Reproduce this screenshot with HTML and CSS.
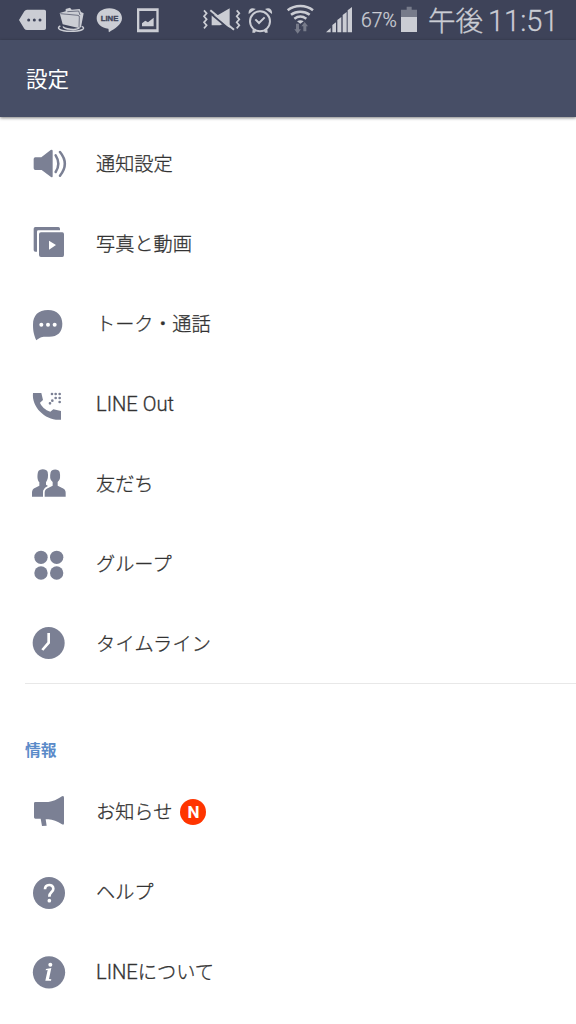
FILE: index.html
```html
<!DOCTYPE html>
<html lang="ja">
<head>
<meta charset="utf-8">
<title>設定</title>
<link rel="stylesheet" href="styles.css">
</head>
<body>
<div class="status">
  <svg class="w38" viewBox="57 0 114 120"><path d="M57 60 73 34Q76 29 81 29H133Q138 29 138 34V85Q138 90 133 90H81Q76 90 73 86Z"/><g class="bar-ink"><circle cx="86" cy="60" r="4.5"/><circle cx="103" cy="60" r="4.5"/><circle cx="120" cy="60" r="4.5"/></g></svg>
  <svg class="w39" viewBox="171 0 117 120"><path d="M179 39 197 34 197 27 210 23 215 29 239 27 243 36 251 40 243 82 236 84 188 73Z"/><path class="bar-line thin" d="M181 41 234 46Q239 47 238 52L237 82M202 35 236 33 240 45"/><path class="line" stroke-width="4.5" d="M181 78C168 84 178 93 211 94C244 94 260 86 245 79M190 79C188 88 232 92 238 83"/></svg>
  <svg class="w40" viewBox="288 0 120 120"><path d="M328 25C350 25 366 38 366 55C366 74 344 86 327 97C325 94 327 90 325 86C304 84 290 71 290 55C290 38 306 25 328 25Z"/><text class="bubble-text" x="302" y="64" textLength="53" lengthAdjust="spacingAndGlyphs">LINE</text></svg>
  <svg class="w24" viewBox="408 0 72 120"><path fill-rule="evenodd" d="M411 25H476V97H411ZM418 33V88H469V33Z"/><path d="M426 79V70L436 62 444 67 461 53V79Z"/></svg>
  <span class="spacer"></span>
  <svg class="w40" viewBox="36 0 120 120"><path d="M65 46H83L119 25V84L97 73 90 76H65Z"/><path class="bar-line" stroke-width="5" d="M60 39 128 96"/><path class="line" stroke-width="6" d="M61 31 132 89"/><path class="line" stroke-width="5" d="M42 31 50 40 42 49 50 58 42 67 50 76 42 85M140 31 148 40 140 49 148 58 140 67 148 76 140 85"/></svg>
  <svg class="w40" viewBox="156 0 120 120"><circle class="line" stroke-width="6" cx="210" cy="64" r="30"/><path class="line" stroke-width="6" d="M196 58 207 69 224 52"/><path d="M176 42C174 28 184 20 197 27ZM246 42C248 28 238 20 225 27ZM188 88 198 93 195 98H187ZM232 88 222 93 225 98H233Z"/></svg>
  <svg class="w40" viewBox="276 0 120 120"><path class="line" stroke-width="7.5" d="M293 31C314 14 348 14 369 31M303 44C319 32 343 32 359 44M313 56C324 48 338 48 349 56"/><path d="M321 64Q331 57 341 64L331 71Z"/><path class="dim" d="M318 71H327V88H333L323 101 313 88H318ZM340 94V79H334L344 66 354 79H349V94Z"/></svg>
  <svg class="w31" viewBox="396 0 93 120"><path d="M408 97 422 84V97ZM427 97V75L438 67V97ZM442 97V60L454 51V97ZM458 97V45L470 36V97ZM473 97V31L486 21V97Z"/></svg>
  <span class="percent">67%</span>
  <svg class="w18" viewBox="93 0 54 120"><path class="dim" d="M93 29H110V20H125V29H141V51H93Z"/><path d="M93 51H141V96H93Z"/></svg>
  <span class="ampm">午後</span><span class="clock">11:51</span>
</div>
<header class="title">設定</header>
<main>
  <ul class="list">
    <li><svg viewBox="24 24 120 120"><path d="M46 67H64L92 45Q98 42 98 48V124Q98 129 92 125L65 105H46Q41 105 41 100V72Q41 67 46 67Z"/><path class="icon-line" stroke-width="7.5" d="M107 61Q123 86 107 111M120 51Q149 86 120 122"/></svg>通知設定</li>
    <li><svg viewBox="24 264 120 120"><path d="M46 276H115Q120 276 120 281V286H55Q51 286 51 290V350H46Q41 350 41 345V281Q41 276 46 276Z"/><path fill-rule="evenodd" d="M63 292H127Q132 292 132 298V360Q132 366 127 366H63Q57 366 57 360V298Q57 292 63 292ZM87 317V344L108 330Z"/></svg>写真と動画</li>
    <li><svg viewBox="24 24 120 120"><path d="M84 45C112 45 127 63 127 86C127 112 112 126 85 125C70 125 62 124 49 136C43 122 39 111 39 89C39 61 55 45 84 45Z"/><g class="paper"><circle cx="64" cy="89" r="6"/><circle cx="84" cy="89" r="6"/><circle cx="104" cy="89" r="6"/></g></svg>トーク・通話</li>
    <li><svg viewBox="24 264 120 120"><path d="M39 294H64L69 315 60 323C63 332 76 346 91 350L100 343 123 348V374C79 379 34 338 39 294Z"/><path class="icon-dots" d="M96 297h0M107 297h0M119 297h0M107 309h0M119 309h0M97 317h0M119 321h0M90 325h0"/></svg><span class="latin">LINE Out</span></li>
    <li><svg viewBox="24 24 120 120"><path d="M36 125V112Q36 102 46 98L58 92V82C52 76 51 63 54 51C57 40 80 40 83 51C86 64 83 75 78 82V89L84 93Q68 100 69 114V125Z"/><path class="person" d="M72 127V113Q72 102 82 98L96 91V82C88 76 87 63 90 51C94 38 117 38 121 51C124 64 122 76 115 82V91L129 98Q139 102 139 113V127Z"/></svg>友だち</li>
    <li><svg viewBox="24 264 120 120"><circle cx="63" cy="307" r="20"/><circle cx="110" cy="307" r="20"/><circle cx="63" cy="354" r="20"/><circle cx="110" cy="354" r="20"/></svg>グループ</li>
    <li><svg viewBox="24 24 120 120"><circle cx="86" cy="84" r="48"/><path class="paper-line" stroke-width="8" d="M86 54V83L67 105"/></svg><span class="wide">タイムライン</span></li>
  </ul>
  <h2 class="section">情報</h2>
  <ul class="list info">
    <li><svg viewBox="24 18 120 120"><path d="M46 51H85Q104 49 126 34Q132 31 132 38V115Q132 121 126 118Q105 105 85 103L77 103 80 122 66 123 62 101H46Q42 101 42 97V55Q42 51 46 51Z"/></svg>お知らせ<span class="badge">N</span></li>
    <li><svg viewBox="24 258 120 120"><circle cx="87" cy="324" r="48"/><path class="paper-line" stroke-width="8" d="M75 313C75 296 100 296 100 311C100 322 88 320 88 335"/><circle class="paper" cx="88" cy="347" r="5.5"/></svg>ヘルプ</li>
    <li><svg viewBox="24 63 120 120"><circle cx="87" cy="127" r="48.5"/><circle class="paper" cx="91" cy="104" r="6"/><path class="paper" d="M78 117 94 114 87 147 94 148 93 152H76L83 120 77 121Z"/></svg><span class="latin">LINE</span>について</li>
  </ul>
</main>
</body>
</html>
```
FILE: styles.css
```css
* { box-sizing: border-box; }
body { margin: 0; height: 1024px; overflow: hidden; background: #fff; color: #333; font-family: "Noto Sans CJK JP", sans-serif; font-weight: 300; }
svg { display: block; flex: none; }
.status { display: flex; align-items: center; height: 40px; padding-left: 19px; background: #3e4359; color: #cbcdd4; fill: #cbcdd4; white-space: nowrap; }
.status svg { height: 40px; }
.w18 { width: 18px; }
.w24 { width: 24px; }
.w31 { width: 31px; }
.w38 { width: 38px; }
.w39 { width: 39px; }
.w40 { width: 40px; }
.spacer { flex: none; width: 42px; }
.line { fill: none; stroke: #cbcdd4; }
.bar-line { fill: none; stroke: #3e4359; }
.thin { stroke-width: 2; }
.bar-ink { fill: #3e4359; }
.dim { fill: #777b8a; }
.bubble-text { font: bold 22px "Liberation Sans", sans-serif; fill: #3e4359; stroke: #3e4359; stroke-width: 1; }
.percent { width: 40px; margin-left: 8px; font: 300 19.4px/40px Roboto, sans-serif; padding-top: 2px; -webkit-text-stroke: .25px; }
.ampm { width: 60px; margin-left: 9px; font-size: 27.5px; line-height: 38px; padding-bottom: 2px; -webkit-text-stroke: .4px; }
.clock { font: 300 29px/40px Roboto, sans-serif; padding-top: 1px; -webkit-text-stroke: .3px; }
.title { display: flex; align-items: center; height: 77px; padding: 0 0 2px 26px; background: #474e66; color: #fff; font-size: 21.5px; font-weight: 400; box-shadow: 0 1px 3px rgba(0, 0, 0, .5); }
.list { margin: 0; padding: 6px 0 0; list-style: none; }
.list li { display: flex; align-items: center; height: 80px; padding-left: 28px; font-size: 19.2px; white-space: nowrap; -webkit-text-stroke: .3px; }
.list svg { width: 40px; height: 40px; margin-right: 28px; fill: #7b8094; }
.latin { font-family: Roboto, sans-serif; font-size: 20.2px; font-weight: 300; padding-top: 1px; }
.wide { letter-spacing: .25px; }
.icon-line { fill: none; stroke: #7b8094; stroke-linecap: round; }
.icon-dots { stroke: #7b8094; stroke-width: 8; stroke-linecap: round; }
.paper { fill: #fff; }
.paper-line { fill: none; stroke: #fff; }
.person { stroke: #fff; stroke-width: 4; }
.section { display: flex; align-items: center; height: 88px; margin: 0 0 0 25px; padding-top: 44px; border-top: 1px solid #e8e8e8; color: #5b8bc9; font-size: 15.8px; font-weight: 700; }
.info { padding-top: 0; }
.badge { display: flex; align-items: center; justify-content: center; width: 26px; height: 26px; margin: 2px 0 0 8px; border-radius: 50%; background: #ff3500; color: #fff; font: 700 17px Roboto, sans-serif; -webkit-text-stroke: 0; }
```
